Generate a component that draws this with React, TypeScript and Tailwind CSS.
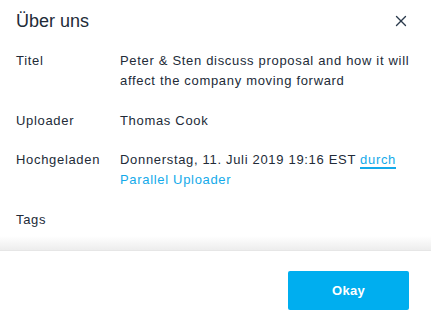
import { X } from 'lucide-react';

const rows: { label: string; value: React.ReactNode }[] = [
  { label: 'Titel', value: 'Peter & Sten discuss proposal and how it will affect the company moving forward' },
  { label: 'Uploader', value: 'Thomas Cook' },
  {
    label: 'Hochgeladen',
    value: (
      <>
        Donnerstag, 11. Juli 2019 19:16 EST{' '}
        <span className="text-[#14aaea] border-b-2 border-[#14aaea]">durch</span>{' '}
        <span className="text-[#14aaea]">Parallel Uploader</span>
      </>
    ),
  },
  { label: 'Tags', value: '' },
];

export default function App() {
  return (
    <div className="w-[431px] h-[318px] bg-white flex flex-col text-[#222b38] font-['Liberation_Sans',Arial,sans-serif] overflow-hidden">
      {/* Header */}
      <div className="flex items-start justify-between pl-4 pr-[21px] pt-[9px]">
        <h1 className="text-[18px] leading-6">Über uns</h1>
        <button className="mt-[3px] text-[#2a3a4c]">
          <X className="w-[18px] h-[18px]" strokeWidth={1.8} />
        </button>
      </div>

      {/* Body */}
      <div className="flex-1 flex flex-col pt-[18px]">
        <div className="flex flex-col gap-[19.5px] pl-4 pr-4">
          {rows.map((r) => (
            <div key={r.label} className="flex text-[13px] leading-5 tracking-[0.68px]">
              <div className="w-[104px] shrink-0">{r.label}</div>
              <div className="flex-1">{r.value}</div>
            </div>
          ))}
        </div>
        <div className="mt-auto h-[14px] bg-gradient-to-b from-white to-[#ededed]" />
      </div>

      {/* Footer */}
      <div className="h-[68px] border-t border-[#e6e6e6] flex items-start justify-end pt-5 pr-[22px]">
        <button className="w-[121px] h-[39px] rounded-[2px] bg-[#00aeef] text-white font-bold text-[13px] tracking-[0.3px]">
          Okay
        </button>
      </div>
    </div>
  );
}
